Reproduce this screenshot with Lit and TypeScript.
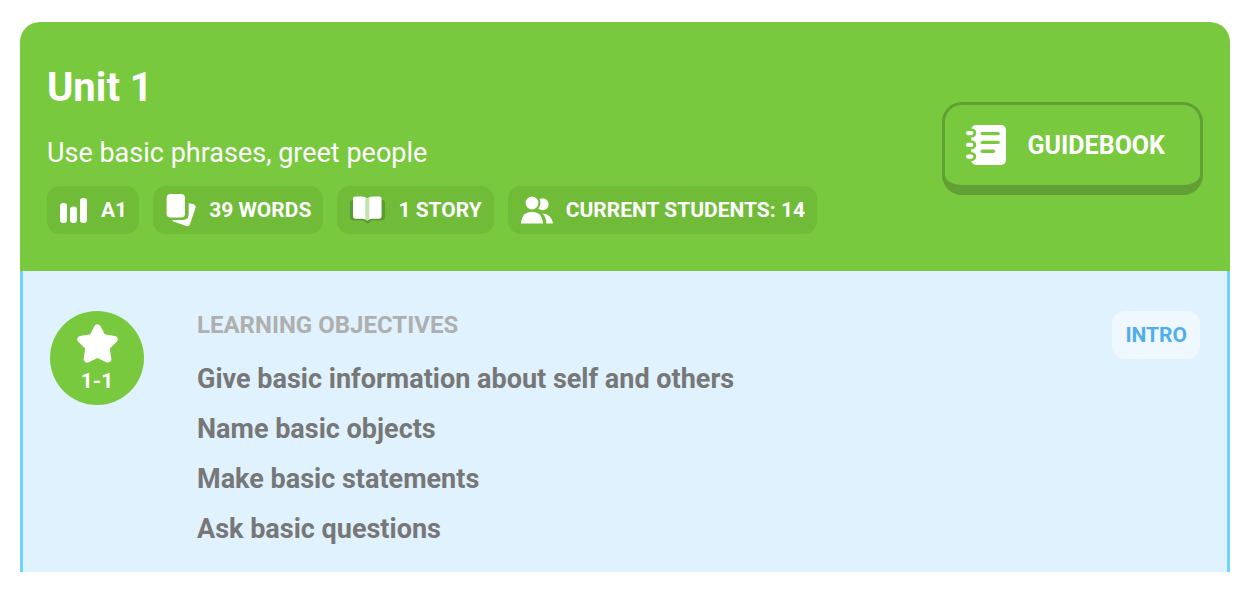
import { LitElement, html, css, svg } from "lit";
import { customElement, property } from "lit/decorators.js";

const levelIcon = html`<svg class="icon" width="28" height="26" viewBox="0 0 28 26" aria-hidden="true">
  <g fill="#fff">
    <rect x="0" y="6" width="7" height="20" rx="3.2" />
    <rect x="10" y="9.5" width="7" height="16.5" rx="3.2" />
    <rect x="20" y="1" width="7" height="25" rx="3.2" />
  </g>
</svg>`;

const wordsIcon = html`<svg class="icon" width="30" height="34" viewBox="0 0 30 34" aria-hidden="true">
  <g fill="#fff">
    <rect x="0.6" y="1" width="18.4" height="23.4" rx="4" />
    <path d="M22.7 10.2 L27.6 11.3 Q30.4 12.3 29.5 15 L24 31 Q23 33.8 20.2 33.1 L7.4 28.4 Q5.4 27.2 7.6 27.1 H17 Q22.7 26.8 22.7 21 Z" />
  </g>
</svg>`;

const storyIcon = html`<svg class="icon" width="35" height="30" viewBox="0 0 35 30" aria-hidden="true">
  <path fill="#5b9a32" d="M0 8 Q0 5 3 5 H32 Q35 5 35 8 V22 Q35 25.5 31.5 25.5 H22.5 Q21 25.5 20 26.8 Q17.5 30 15 26.8 Q14 25.5 12.5 25.5 H3.5 Q0 25.5 0 22 Z" />
  <path fill="#fff" d="M3 4 Q3 1.5 5.5 1.5 H12 Q15.2 1.5 17.3 3.6 Q19.4 1.5 22.5 1.5 H29 Q31.6 1.5 31.6 4 V21 Q31.6 23.7 29 23.7 H22 Q19.6 23.7 17.3 25.4 Q15 23.7 12.6 23.7 H5.6 Q3 23.7 3 21 Z" />
  <path fill="#c3e4ae" d="M15.3 2.3 L17.3 3.6 L19.4 2.3 V24 L17.3 25.4 L15.3 24 Z" />
</svg>`;

const studentsIcon = html`<svg class="icon" width="32" height="28" viewBox="0 0 32 28" aria-hidden="true">
  <circle cx="21.6" cy="8.2" r="6" fill="#fff" />
  <circle class="cutout" cx="11" cy="7" r="7.4" stroke-width="2" />
  <circle cx="11" cy="7" r="6.4" fill="#fff" />
  <path fill="#fff" d="M0 27.6 V26 Q1.6 15.8 11 15.8 Q20.4 15.8 22 26 V27.6 Z" />
  <path fill="#fff" d="M21.6 17.6 Q29.8 18.4 31.8 26.4 V27.6 H25.4 Q25.2 21.6 21.6 17.6 Z" />
</svg>`;

const ring = (y: number) => svg`<rect x="-1.6" y="${y - 2.4}" width="11.8" height="8.8" rx="4.2" fill="#78c93e" /><rect x="0" y="${y}" width="7.4" height="4.2" rx="2.1" fill="#fff" />`;

const notebookIcon = html`<svg class="icon" width="40" height="40" viewBox="0 0 40 40" aria-hidden="true">
  <rect x="5.2" y="0" width="34.8" height="40" rx="5" fill="#fff" />
  ${[6, 17.8, 29.6].map(ring)}
  <g fill="#78c93e">
    <rect x="14.6" y="6.9" width="19.2" height="3.4" rx="1.7" />
    <rect x="14.6" y="15.7" width="19.2" height="3.4" rx="1.7" />
    <rect x="14.6" y="24.5" width="14.6" height="3.4" rx="1.7" />
  </g>
</svg>`;

const starIcon = html`<svg class="icon" width="41" height="39" viewBox="0 0 41 39" aria-hidden="true">
  <path fill="#fff" stroke="#fff" stroke-width="7" stroke-linejoin="round"
    d="M20.5 3.9 L25.4 13.4 L37.2 15.4 L29.2 23.4 L30.8 35 L20.5 30 L10.2 35 L11.8 23.4 L3.8 15.4 L15.6 13.4 Z" />
</svg>`;

const stats = [
  { icon: levelIcon, label: "A1" },
  { icon: wordsIcon, label: "39 WORDS" },
  { icon: storyIcon, label: "1 STORY" },
  { icon: studentsIcon, label: "CURRENT STUDENTS: 14" },
];

@customElement("stat-pill")
class StatPill extends LitElement {
  @property() label = "";
  @property({ attribute: false }) icon: unknown;

  static styles = css`
    :host {
      display: flex;
      align-items: center;
      gap: 13px;
      height: 48px;
      padding: 0 12px 0 13px;
      border-radius: 13px;
      background: #70bc39;
      color: #fff;
      font-size: 21px;
      font-weight: 700;
      white-space: nowrap;
    }
    .icon {
      display: block;
      flex: none;
    }
    .cutout {
      fill: #70bc39;
      stroke: #70bc39;
    }
  `;

  render() {
    return html`${this.icon}<span>${this.label}</span>`;
  }
}

@customElement("app-root")
class AppRoot extends LitElement {
  static styles = css`
    :host {
      display: block;
      padding: 22px 24px 28px 20px;
      background: #fff;
      font-family: Roboto, "Liberation Sans", sans-serif;
    }
    .icon {
      display: block;
      flex: none;
    }
    .header {
      display: flex;
      align-items: center;
      justify-content: space-between;
      gap: 24px;
      padding: 41px 27px 37px;
      border-radius: 20px 20px 0 0;
      background: #78c93e;
      color: #fff;
    }
    .title {
      margin: 0;
      font-size: 40px;
      line-height: 50px;
      font-weight: 700;
    }
    .subtitle {
      margin: 20px 0 13px;
      font-size: 27px;
      line-height: 40px;
      font-weight: 400;
    }
    .stats {
      display: flex;
      flex-wrap: wrap;
      gap: 14px;
    }
    .guidebook {
      display: flex;
      align-items: center;
      flex: none;
      gap: 22px;
      height: 93px;
      margin: 0;
      padding: 0 35px 0 21px;
      border: 3px solid #629f34;
      border-bottom-width: 10px;
      border-radius: 20px;
      background: #78c93e;
      color: #fff;
      font: inherit;
      font-size: 25px;
      font-weight: 700;
    }
    .body {
      display: grid;
      grid-template-columns: 94px 1fr auto;
      align-items: start;
      column-gap: 53px;
      padding: 40px 27px 18px;
      border: solid #70d3fb;
      border-width: 0 3px;
      background: #dff2fe;
    }
    .badge {
      display: flex;
      flex-direction: column;
      align-items: center;
      gap: 6px;
      height: 94px;
      padding-top: 13px;
      box-sizing: border-box;
      border-radius: 50%;
      background: #78c93e;
      color: #fff;
      font-size: 21px;
      line-height: 24px;
      font-weight: 700;
    }
    .heading {
      margin: 0 0 15px;
      color: #afafaf;
      font-size: 24px;
      line-height: 28px;
      font-weight: 700;
    }
    .objectives {
      margin: 0;
      padding: 0;
      list-style: none;
      color: #777;
      font-size: 27px;
      line-height: 50px;
      font-weight: 700;
    }
    .tag {
      padding: 0 13px;
      border-radius: 13px;
      background: #eff8ff;
      color: #50adf1;
      font-size: 21px;
      line-height: 48px;
      font-weight: 700;
    }
  `;

  render() {
    return html`
      <header class="header">
        <div>
          <h1 class="title">Unit 1</h1>
          <p class="subtitle">Use basic phrases, greet people</p>
          <div class="stats">
            ${stats.map((s) => html`<stat-pill .icon=${s.icon} .label=${s.label}></stat-pill>`)}
          </div>
        </div>
        <button class="guidebook" type="button">${notebookIcon}<span>GUIDEBOOK</span></button>
      </header>
      <section class="body">
        <div class="badge">${starIcon}<span>1-1</span></div>
        <div>
          <h2 class="heading">LEARNING OBJECTIVES</h2>
          <ul class="objectives">
            <li>Give basic information about self and others</li>
            <li>Name basic objects</li>
            <li>Make basic statements</li>
            <li>Ask basic questions</li>
          </ul>
        </div>
        <span class="tag">INTRO</span>
      </section>
    `;
  }
}
